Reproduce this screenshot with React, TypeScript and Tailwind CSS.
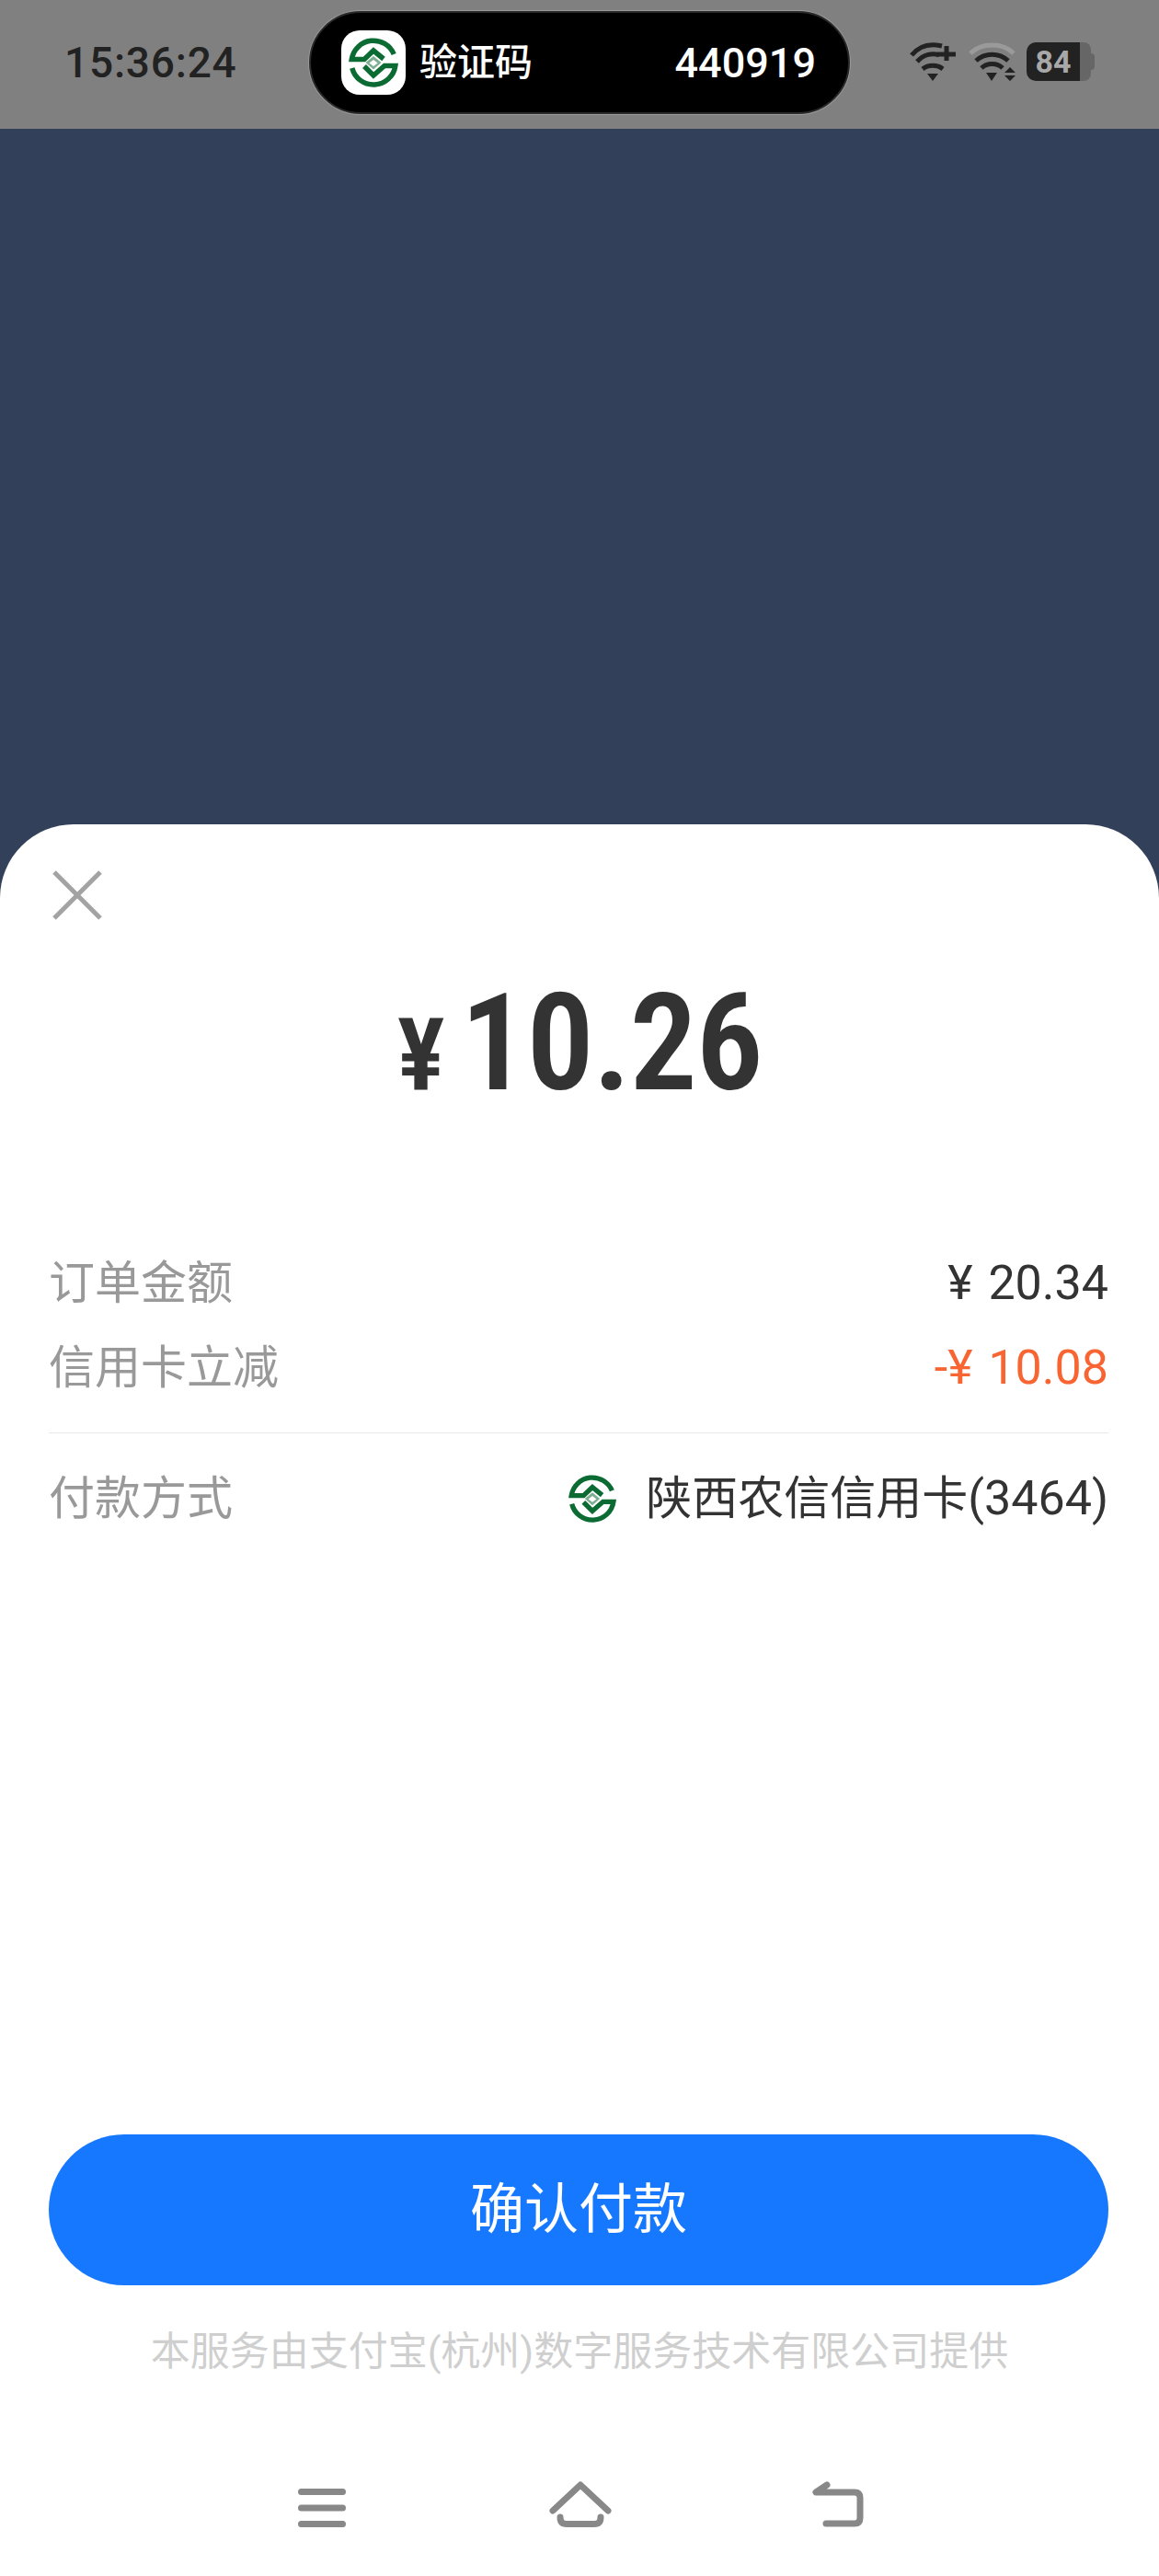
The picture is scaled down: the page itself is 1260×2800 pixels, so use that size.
import { ReactNode } from 'react';

function BankLogo({ className }: { className: string }) {
  return (
    <svg viewBox="0 0 54 54" className={className} fill="none">
      <path d="M49.2 18A24 24 0 0 0 3.3 23.500H17L27 14L38 23" stroke="#0b6b33" strokeWidth="5.5" />
      <path d="M3.800 33A24 24 0 0 0 50.800 30.500H39L27 41L17 31" stroke="#0b6b33" strokeWidth="5.5" />
      <path d="M27 20L35.500 27L27 34.500L18.500 27Z" fill="#7fae92" />
      <path d="M27 24L31.500 27.500L27 31L22.500 27.500Z" fill="#ffffff" />
    </svg>
  );
}

function SignalPlus() {
  return (
    <svg viewBox="0 0 51 42" className="h-[42px] w-[51px]" fill="none" stroke="#222" strokeWidth="5">
      <path d="M3 14C12 3 24 1 36 4" />
      <path d="M9 21C16 13 26 11 33 14" />
      <path d="M15 29C21 24 31 24 37 29" />
      <path d="M20 34H32L26 42Z" fill="#222" stroke="none" />
      <path d="M31 13H51M41 4V20" strokeWidth="5" />
    </svg>
  );
}

function SignalData() {
  return (
    <svg viewBox="0 0 51 42" className="h-[42px] w-[51px]" fill="none" stroke="#222" strokeWidth="5">
      <path d="M2 12C14 0 37 0 49 12" stroke="#9a9a9a" />
      <path d="M8 20C18 11 33 11 43 20" />
      <path d="M14 28C20 22 31 22 37 28" />
      <path d="M19 33H31L25 42Z" fill="#222" stroke="none" />
      <path d="M45 27L51 33H39Z M39 36H51L45 42Z" fill="#222" stroke="none" />
    </svg>
  );
}

function Battery() {
  return (
    <div className="flex h-[42px] w-[74px] items-center">
      <div className="flex h-full w-[58px] items-center justify-center rounded-l-[10px] bg-[#222] text-[34px] font-bold leading-none text-[#a8a8a8]">
        84
      </div>
      <div className="h-full w-3 rounded-r-[8px] bg-[#666]" />
      <div className="h-[18px] w-1 rounded-r-sm bg-[#666]" />
    </div>
  );
}

function StatusBar() {
  return (
    <div className="flex h-[140px] bg-[#808080]">
      <div className="w-[336px] pl-[70px] pt-[38px] text-[46px] font-medium leading-[60px] tracking-[0.8px] text-[#222]">
        15:36:24
      </div>
      <div className="mt-3 flex h-[112px] w-[588px] items-center rounded-full border-2 border-[#2a2a2a] bg-black pl-[33px] pr-[35px] shadow-[0_0_0_1px_#9a9a9a]">
        <div className="flex h-[70px] w-[70px] items-center justify-center rounded-[20px] bg-white">
          <BankLogo className="h-[54px] w-[54px]" />
        </div>
        <span className="ml-[15px] text-[41px] font-medium leading-none text-white">验证码</span>
        <span className="ml-auto text-[45px] font-medium leading-none text-white">440919</span>
      </div>
      <div className="ml-[64px] mt-[46px] flex items-start">
        <SignalPlus />
        <div className="ml-[14px]">
          <SignalData />
        </div>
        <div className="ml-3">
          <Battery />
        </div>
      </div>
    </div>
  );
}

function Row({ label, children }: { label: string; children: ReactNode }) {
  return (
    <div className="flex h-[92px] items-center justify-between">
      <span className="text-[#999]">{label}</span>
      {children}
    </div>
  );
}

function NavBar() {
  return (
    <div className="mt-[113px] flex items-start pl-[324px]">
      <svg viewBox="0 0 52 42" className="mt-[8px] h-[42px] w-[52px]" fill="none" stroke="#888" strokeWidth="7" strokeLinecap="round">
        <path d="M3.500 3.500H48.500M3.500 21H48.500M3.500 38.500H48.500" />
      </svg>
      <svg viewBox="0 0 68 50" className="ml-[221px] h-[50px] w-[68px]" fill="none" stroke="#888" strokeWidth="7" strokeLinecap="round" strokeLinejoin="round">
        <path d="M4 32L34 4L64 32" />
        <path d="M12 39V39C12 44 14 46.500 19 46.500H49C54 46.500 56 44 56 39" />
      </svg>
      <svg viewBox="0 0 56 50" className="ml-[218px] h-[50px] w-[56px]" fill="none" stroke="#888" strokeWidth="7" strokeLinecap="round" strokeLinejoin="round">
        <path d="M16 4L4 12H46C50 12 52 14 52 18V40C52 44 50 46 46 46H15" />
      </svg>
    </div>
  );
}

export default function App() {
  return (
    <div className="flex h-[2800px] w-[1260px] flex-col overflow-hidden bg-[#334059] [font-family:Roboto,'Noto_Sans_CJK_SC',sans-serif]">
      <StatusBar />
      <div className="h-[756px]" />
      <div className="flex flex-1 flex-col rounded-t-[80px] bg-white">
        <svg viewBox="0 0 54 54" className="ml-[57px] mt-[50px] h-[54px] w-[54px]" fill="none" stroke="#a3a3a3" strokeWidth="5">
          <path d="M2 2L52 52M52 2L2 52" />
        </svg>

        <div className="mt-[45px] flex h-[180px] items-baseline justify-center font-semibold text-[#333] [font-family:'Roboto_Condensed','Liberation_Sans_Narrow',Roboto,sans-serif]">
          <span className="mr-[17px] text-[110px] leading-[180px]">¥</span>
          <span className="text-[146px] leading-[180px] tracking-[-1.5px]">10.26</span>
        </div>

        <div className="ml-[53px] mr-[55px] mt-[124px] text-[50px] leading-none">
          <Row label="订单金额">
            <span className="text-[52px] text-[#333] [word-spacing:4px]">¥ 20.34</span>
          </Row>
          <Row label="信用卡立减">
            <span className="text-[52px] text-[#f96532] [word-spacing:4px]">-¥ 10.08</span>
          </Row>
          <div className="mt-[24px] h-px bg-[#e8e8e8]" />
          <div className="mt-[25px]">
            <Row label="付款方式">
              <div className="flex items-center text-[#333]">
                <BankLogo className="h-[52px] w-[52px]" />
                <span className="ml-[32px]">
                  陕西农信信用卡<span className="text-[52px]">(3464)</span>
                </span>
              </div>
            </Row>
          </div>
        </div>

        <button className="ml-[53px] mr-[55px] mt-[645px] h-[164px] rounded-full bg-[#1677ff] text-[59px] text-white">
          确认付款
        </button>
        <div className="mt-[44px] text-center text-[43px] leading-[56px] text-[#cfcfcf]">
          本服务由支付宝(杭州)数字服务技术有限公司提供
        </div>

        <NavBar />
      </div>
    </div>
  );
}
